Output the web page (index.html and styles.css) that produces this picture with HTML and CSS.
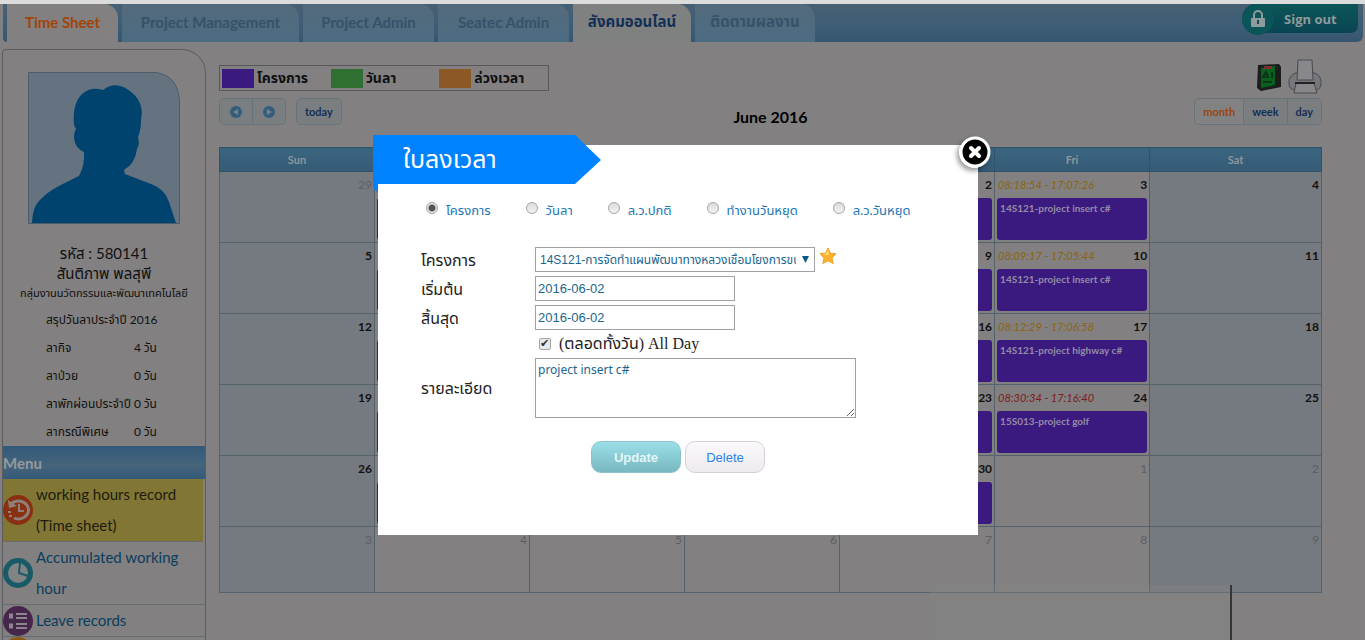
FILE: index.html
```html
<!DOCTYPE html>
<html lang="th">
<head>
<meta charset="utf-8">
<title>Time Sheet</title>
<link rel="stylesheet" href="styles.css">
</head>
<body>
<div class="page">
  <header class="topbar">
    <nav class="tabs">
      <a class="tab tab-current" href="#">Time Sheet</a>
      <a class="tab tab-wide" href="#">Project Management</a>
      <a class="tab" href="#">Project Admin</a>
      <a class="tab" href="#">Seatec Admin</a>
      <a class="tab tab-social" href="#">สังคมออนไลน์</a>
      <a class="tab tab-last" href="#">ติดตามผลงาน</a>
    </nav>
    <a class="signout" href="#">
      <span class="signout-icon"><svg viewBox="0 0 16 20" width="16" height="20"><path d="M4 9V6a4 4 0 0 1 8 0v3" fill="none" stroke="#8f9b9c" stroke-width="2"/><rect x="1" y="9" width="14" height="9" rx="1" fill="#8f9b9c"/><path d="M8 11v4" stroke="#15494f" stroke-width="2"/></svg></span>
      Sign out
    </a>
  </header>

  <div class="columns">
    <aside class="sidebar">
      <svg class="avatar" viewBox="0 0 152 152"><path d="M.5 .5H128Q151.500 4 151.500 32V151.500H.5Z" fill="#64737f" stroke="#4c5c69"/><path d="M4 151C5 139 6 134 13 127C22 117 37 111 51 104Q57 93 56 80Q47 76 46 66Q46 60 48 57L46 53Q44 32 54 22Q63 14 75 18Q86 9 99 17Q117 28 113 48Q113 58 110 65Q112 72 109 77Q107 92 96 98L97 102L123 112Q137 117 141 130L148 151Z" fill="#00436f"/></svg>
      <div class="who">
        <p class="who-name">รหัส : 580141</p>
        <p class="who-name">สันติภาพ พลสุพี</p>
        <p class="who-group">กลุ่มงานนวัตกรรมและพัฒนาเทคโนโลยี</p>
      </div>
      <table class="leave">
        <caption>สรุปวันลาประจำปี 2016</caption>
        <tr><th>ลากิจ</th><td>4</td><td>วัน</td></tr>
        <tr><th>ลาป่วย</th><td>0</td><td>วัน</td></tr>
        <tr><th>ลาพักผ่อนประจำปี</th><td>0</td><td>วัน</td></tr>
        <tr><th>ลากรณีพิเศษ</th><td>0</td><td>วัน</td></tr>
      </table>
      <h2 class="menu-title">Menu</h2>
      <nav class="menu">
        <a class="menu-item menu-current" href="#">
          <svg viewBox="0 0 30 30" width="30" height="30"><circle cx="15" cy="15" r="15" fill="#8a2f12"/><path d="M8 9A10 9 0 1 1 11 23" fill="none" stroke="#8d8279" stroke-width="3"/><path d="M5 5l1 8 8-2Z" fill="#8d8279"/><path d="M16 9v7h5" fill="none" stroke="#8d8279" stroke-width="2"/><path d="M5 17h3M6 21h3" stroke="#8d8279" stroke-width="2"/></svg>
          <span>working hours record (Time sheet)</span>
        </a>
        <a class="menu-item" href="#">
          <svg viewBox="0 0 30 30" width="30" height="30"><circle cx="15" cy="15" r="15" fill="#185a66"/><circle cx="15" cy="15" r="10" fill="#808484"/><path d="M17 5l-1 10 9 3" fill="none" stroke="#185a66" stroke-width="2"/></svg>
          <span>Accumulated working hour</span>
        </a>
        <a class="menu-item" href="#">
          <svg viewBox="0 0 30 30" width="30" height="30"><circle cx="15" cy="15" r="15" fill="#46264a"/><path d="M6 10h4M6 20h4" stroke="#8c858d" stroke-width="5"/><path d="M13 8h11M13 12h11M13 18h11M13 22h11" stroke="#8c858d" stroke-width="2"/></svg>
          <span>Leave records</span>
        </a>
        <a class="menu-item" href="#" aria-label="More">
          <svg viewBox="0 0 30 30" width="30" height="30"><circle cx="15" cy="15" r="15" fill="#8a5a12"/></svg>
        </a>
      </nav>
    </aside>

    <main class="main">
      <div class="tools">
        <ul class="legend">
          <li><i class="swatch swatch-project"></i>โครงการ</li>
          <li><i class="swatch swatch-leave"></i>วันลา</li>
          <li><i class="swatch swatch-overtime"></i>ล่วงเวลา</li>
        </ul>
        <div class="exports">
          <a href="#" aria-label="Book"><svg viewBox="0 0 26 28" width="26" height="28"><path d="M2 2L23 1L25 4V24L5 28L1 25Z" fill="#191d1b"/><path d="M5 5L19 3V22L5 25Z" fill="#08611f"/><path d="M8 3h8v3H8Z" fill="#7b3030"/><path d="M7 14l3-5 2 5ZM16 9v6M7 19h9" fill="none" stroke="#0b3516" stroke-width="2"/></svg></a>
          <a href="#" aria-label="Print"><svg viewBox="0 0 34 36" width="34" height="36"><g stroke="#4a4a4e"><path d="M8 14Q3 15 1 21Q0 30 6 31H28Q34 30 33 21Q31 15 26 14Z" fill="#77777b"/><path d="M10 1H24L25 21H9Z" fill="#88888c"/><path d="M8 24H26L29 34H6Z" fill="#88888c"/></g><path d="M7 23h20v2H7Z" fill="#222"/></svg></a>
        </div>
      </div>
      <div class="calbar">
        <div class="calbar-left">
          <div class="group">
            <button class="calbtn calbtn-arrow" aria-label="Previous"><svg viewBox="0 0 12 12" width="12" height="12"><circle cx="6" cy="6" r="6" fill="#345d7c"/><path d="M8 3v6L3 6Z" fill="#76838c"/></svg></button><button class="calbtn calbtn-arrow" aria-label="Next"><svg viewBox="0 0 12 12" width="12" height="12"><circle cx="6" cy="6" r="6" fill="#345d7c"/><path d="M4 3v6L9 6Z" fill="#76838c"/></svg></button>
          </div>
          <div class="group"><button class="calbtn">today</button></div>
        </div>
        <h1 class="month">June 2016</h1>
        <div class="calbar-right">
          <div class="group">
            <button class="calbtn calbtn-on">month</button><button class="calbtn">week</button><button class="calbtn">day</button>
          </div>
        </div>
      </div>
      <table class="cal">
        <thead><tr><th>Sun</th><th aria-label="Mon"></th><th>Tue</th><th>Wed</th><th>Thu</th><th>Fri</th><th class="col-sat">Sat</th></tr></thead>
        <tbody>
          <tr>
            <td class="off out"><div class="day"><b>29</b></div></td>
            <td class="out"><div class="day"><b>30</b></div><div class="event"></div></td>
            <td class="out"><div class="day"><b>31</b></div><div class="event"></div></td>
            <td><div class="day"><b>1</b></div><div class="event"></div></td>
            <td><div class="day"><b>2</b></div><div class="event"></div></td>
            <td><div class="day"><i>08:18:54 - 17:07:26</i><b>3</b></div><div class="event">14S121-project insert c#</div></td>
            <td class="off"><div class="day"><b>4</b></div></td>
          </tr>
          <tr>
            <td class="off"><div class="day"><b>5</b></div></td>
            <td><div class="day"><b>6</b></div><div class="event"></div></td>
            <td><div class="day"><b>7</b></div><div class="event"></div></td>
            <td><div class="day"><b>8</b></div><div class="event"></div></td>
            <td><div class="day"><b>9</b></div><div class="event"></div></td>
            <td><div class="day"><i>08:09:17 - 17:05:44</i><b>10</b></div><div class="event">14S121-project insert c#</div></td>
            <td class="off"><div class="day"><b>11</b></div></td>
          </tr>
          <tr>
            <td class="off"><div class="day"><b>12</b></div></td>
            <td><div class="day"><b>13</b></div><div class="event"></div></td>
            <td><div class="day"><b>14</b></div><div class="event"></div></td>
            <td><div class="day"><b>15</b></div><div class="event"></div></td>
            <td><div class="day"><b>16</b></div><div class="event"></div></td>
            <td><div class="day"><i>08:12:29 - 17:06:58</i><b>17</b></div><div class="event">14S121-project highway c#</div></td>
            <td class="off"><div class="day"><b>18</b></div></td>
          </tr>
          <tr>
            <td class="off"><div class="day"><b>19</b></div></td>
            <td><div class="day"><b>20</b></div><div class="event"></div></td>
            <td><div class="day"><b>21</b></div><div class="event"></div></td>
            <td><div class="day"><b>22</b></div><div class="event"></div></td>
            <td><div class="day"><b>23</b></div><div class="event"></div></td>
            <td><div class="day"><i class="late">08:30:34 - 17:16:40</i><b>24</b></div><div class="event">15S013-project golf</div></td>
            <td class="off"><div class="day"><b>25</b></div></td>
          </tr>
          <tr>
            <td class="off"><div class="day"><b>26</b></div></td>
            <td><div class="day"><b>27</b></div><div class="event"></div></td>
            <td><div class="day"><b>28</b></div><div class="event"></div></td>
            <td><div class="day"><b>29</b></div><div class="event"></div></td>
            <td><div class="day"><b>30</b></div><div class="event"></div></td>
            <td class="out"><div class="day"><b>1</b></div></td>
            <td class="off out"><div class="day"><b>2</b></div></td>
          </tr>
          <tr class="short">
            <td class="off out"><div class="day"><b>3</b></div></td>
            <td class="out"><div class="day"><b>4</b></div></td>
            <td class="out"><div class="day"><b>5</b></div></td>
            <td class="out"><div class="day"><b>6</b></div></td>
            <td class="out"><div class="day"><b>7</b></div></td>
            <td class="out"><div class="day"><b>8</b></div></td>
            <td class="off out"><div class="day"><b>9</b></div></td>
          </tr>
        </tbody>
      </table>
    </main>
  </div>

  <div class="toast"></div>

  <div class="overlay">
    <section class="dialog" role="dialog" aria-labelledby="dialog-title">
      <div class="ribbon">
        <svg class="ribbon-shape" viewBox="0 0 228 58" width="228" height="58"><path d="M0 0H202L228 25L202 49H5V58L0 52Z" fill="#0082ff"/></svg>
        <h2 class="ribbon-title" id="dialog-title">ใบลงเวลา</h2>
      </div>
      <button class="close" aria-label="Close"><svg viewBox="0 0 32 32" width="32" height="32"><circle cx="16" cy="16" r="14" fill="#000" stroke="#fff" stroke-width="3"/><path d="M12 12l8 8M20 12l-8 8" stroke="#fff" stroke-width="4" stroke-linecap="round"/></svg></button>
      <form class="form">
        <div class="kinds">
          <label><input class="radio" type="radio" name="kind" checked>โครงการ</label>
          <label><input class="radio" type="radio" name="kind">วันลา</label>
          <label><input class="radio" type="radio" name="kind">ล.ว.ปกติ</label>
          <label><input class="radio" type="radio" name="kind">ทำงานวันหยุด</label>
          <label><input class="radio" type="radio" name="kind">ล.ว.วันหยุด</label>
        </div>
        <div class="fields">
          <label for="project">โครงการ</label>
          <div class="project">
            <div class="select-wrap">
              <select class="box select" id="project"><option>14S121-การจัดทำแผนพัฒนาทางหลวงเชื่อมโยงการขนส่ง</option></select>
              <svg class="caret" viewBox="0 0 7 7" width="7" height="7"><path d="M0 0h7L3.500 7Z" fill="#0b5a85"/></svg>
            </div>
            <svg class="star" viewBox="0 0 18 18" width="18" height="18"><path d="M9 1l2.400 5.200 5.600.6-4 4 1.200 5.800L9 13.800 3.800 16.600 5 10.800l-4-4 5.600-.6Z" fill="#fbb02e" stroke="#f5a02a" stroke-linejoin="round"/><path d="M9 2.500L7 7l-4.500.6L10 8Z" fill="#fddd75"/></svg>
          </div>
          <label for="start">เริ่มต้น</label>
          <input class="box date" id="start" type="text" value="2016-06-02">
          <label for="end">สิ้นสุด</label>
          <input class="box date" id="end" type="text" value="2016-06-02">
          <label class="allday"><input class="check" type="checkbox" checked>(ตลอดทั้งวัน) All Day</label>
          <label for="detail">รายละเอียด</label>
          <textarea class="box detail" id="detail">project insert c#</textarea>
        </div>
        <div class="actions">
          <button class="btn btn-update" type="button">Update</button>
          <button class="btn btn-delete" type="button">Delete</button>
        </div>
      </form>
    </section>
  </div>
</div>
</body>
</html>
```
FILE: styles.css
```css
* { box-sizing: border-box; }

body {
  margin: 0;
  background: #828080;
  font-family: Lato, "Noto Sans Thai", "Liberation Sans", sans-serif;
  color: #111;
}

a { text-decoration: none; color: inherit; }
button { font-family: inherit; cursor: pointer; }
h1, h2, p, ul { margin: 0; padding: 0; }

.page {
  position: relative;
  height: 100vh;
  overflow: hidden;
  border-top: 4px solid #dcdcdc;
}

/* Top bar */
.topbar {
  display: flex;
  justify-content: space-between;
  height: 38px;
  margin: 0 2px 0 3px;
  padding-left: 4px;
  background: linear-gradient(#476073, #3d5d77 60%, #38556e);
  border-radius: 0 0 6px 4px;
}
.tabs { display: flex; gap: 4px; }
.tab {
  display: flex;
  align-items: center;
  justify-content: center;
  width: 131px;
  height: 38px;
  padding-bottom: 2px;
  background: linear-gradient(#536a7b, #4c6c82);
  border-radius: 0 14px 0 0;
  color: #355269;
  font-size: 15px;
  font-weight: 700;
}
.tab-current { width: 111px; background: #828080; color: #a24408; }
.tab-wide { width: 177px; }
.tab-social { width: 118px; background: #7f8080; color: #122f55; }
.tab-last { width: 120px; }
.signout {
  display: flex;
  align-items: center;
  gap: 10px;
  width: 116px;
  height: 29px;
  margin-right: 5px;
  background: linear-gradient(#0b5558, #0a4552);
  border-radius: 16px 0 8px 16px;
  color: #8f9b9c;
  font: 700 13px "Open Sans", sans-serif;
  white-space: nowrap;
}
.signout-icon {
  display: flex;
  flex: none;
  align-items: center;
  justify-content: center;
  width: 32px;
  height: 32px;
  border-radius: 50%;
  background: #0b5558;
}

/* Columns */
.columns { display: flex; gap: 13px; padding: 7px 43px 0 2px; }

.sidebar {
  flex: none;
  width: 204px;
  border: 1px solid #5b5c60;
  border-radius: 4px 24px 0 0;
}
.avatar { display: block; width: 152px; height: 152px; margin: 22px 0 0 25px; }
.who { padding-top: 19px; text-align: center; white-space: nowrap; }
.who p { line-height: 20px; }
.who-name { font-size: 15px; }
.who-group { font-size: 11px; }
.leave {
  width: 116px;
  margin: 3px 0 0 43px;
  border-collapse: collapse;
  font-size: 12px;
  line-height: 28px;
  white-space: nowrap;
  text-align: left;
}
.leave caption { text-align: left; }
.leave th { width: 88px; max-width: 88px; padding: 0; font-weight: 400; }
.leave td { padding: 0; }
.menu-title {
  height: 33px;
  background: linear-gradient(#33597a, #46647b 60%, #33597a);
  color: #94999d;
  font-size: 15px;
  line-height: 35px;
}
.menu-item {
  display: flex;
  align-items: center;
  gap: 3px;
  border-bottom: 1px solid #686c70;
  color: #0b3d5e;
  font-size: 15px;
  line-height: 31px;
}
.menu-item svg { flex: none; }
.menu-current { margin-right: 2px; background: #817634; color: #201c10; }

/* Main area */
.main { flex: 1; min-width: 0; padding-top: 9px; }
.tools { display: flex; justify-content: space-between; height: 40px; }
.legend {
  display: flex;
  align-items: center;
  width: 330px;
  height: 26px;
  margin-top: 7px;
  padding-left: 2px;
  border: 1px solid #58585a;
  list-style: none;
  font-size: 14px;
  font-weight: 700;
}
.legend li { display: flex; align-items: center; gap: 3px; width: 109px; }
.swatch { width: 32px; height: 19px; }
.swatch-project { background: #3b1a80; }
.swatch-leave { background: #2f7032; }
.swatch-overtime { background: #8c5825; }
.exports { display: flex; align-items: center; gap: 6px; }

.calbar {
  display: grid;
  grid-template-columns: 1fr auto 1fr;
  align-items: center;
  height: 27px;
}
.calbar-left { display: flex; gap: 10px; }
.calbar-right { display: flex; justify-content: flex-end; }
.group {
  display: flex;
  border: 1px solid #68727a;
  border-radius: 5px;
  overflow: hidden;
}
.calbtn {
  display: flex;
  align-items: center;
  height: 25px;
  padding: 0 8px;
  border: 0;
  background: #7b7e81;
  color: #122f55;
  font-size: 11px;
  font-weight: 700;
}
.calbtn + .calbtn { border-left: 1px solid #68727a; }
.calbtn-arrow { padding: 0 10px; }
.calbtn-on { background: #838282; color: #97460d; }
.month { padding-top: 10px; font-size: 16px; line-height: 17px; color: #000; }

.cal {
  width: 100%;
  margin-top: 22px;
  border-collapse: collapse;
  table-layout: fixed;
}
.cal th {
  height: 24px;
  padding: 0;
  border: 1px solid #315268;
  background: linear-gradient(#3b657f, #355b76);
  color: #8e969a;
  font-size: 11px;
}
.cal .col-sat { width: 15.6%; }
.cal td {
  height: 71px;
  padding: 0;
  border: 1px solid #53626b;
  vertical-align: top;
}
.cal .short td { height: 66px; }
.off { background: #757980; }
.day {
  display: flex;
  padding: 4px 2px 0 3px;
  font-size: 11px;
  line-height: 18px;
  white-space: nowrap;
}
.day b { margin-left: auto; font-size: 12px; }
.day i { color: #8c6410; }
.day .late { color: #80191c; }
.out b { color: #5e5f62; font-weight: 400; }
.event {
  height: 42px;
  margin: 4px 2px 0;
  padding: 3px;
  border-radius: 3px;
  background: #3b1a80;
  color: #948aa6;
  font-size: 10px;
  font-weight: 700;
  line-height: 15px;
  white-space: nowrap;
}

.toast {
  position: absolute;
  right: 133px;
  bottom: 0;
  width: 302px;
  height: 55px;
  background: rgba(135, 135, 135, .35);
  border-right: 2px solid #333537;
}

/* Dialog */
.overlay {
  position: absolute;
  inset: 0;
  display: flex;
  justify-content: center;
  align-items: flex-start;
  padding: 141px 9px 0 0;
}
.dialog {
  position: relative;
  width: 600px;
  min-height: 390px;
  padding: 55px 43px 62px;
  background: #fff;
}
.ribbon { position: absolute; left: -5px; top: -10px; }
.ribbon-shape { display: block; }
.ribbon-title {
  position: absolute;
  left: 30px;
  top: 0;
  color: #fff;
  font-size: 25px;
  font-weight: 400;
  line-height: 47px;
  white-space: nowrap;
}
.close {
  position: absolute;
  right: -13px;
  top: -9px;
  padding: 0;
  border: 0;
  border-radius: 50%;
  background: none;
  box-shadow: -2px 3px 5px rgba(0, 0, 0, .4);
  line-height: 0;
}
.kinds {
  display: flex;
  gap: 35px;
  padding-left: 5px;
  color: #1b78b5;
  font-size: 13px;
  line-height: 20px;
  white-space: nowrap;
}
.kinds label { display: flex; gap: 8px; }
.radio {
  appearance: none;
  width: 12px;
  height: 12px;
  margin: 2px 0 0;
  border: 1px solid #a5a5a5;
  border-radius: 50%;
  background: linear-gradient(#dcdcdc, #f2f2f2);
}
.radio:checked { background: radial-gradient(#555 0 3px, #e6e6e6 4px); }

.fields {
  display: grid;
  grid-template-columns: 114px 1fr;
  row-gap: 4px;
  align-items: center;
  justify-items: start;
  margin-top: 27px;
  font-size: 16px;
  line-height: 20px;
  color: #222;
}
.box {
  margin: 0;
  height: 25px;
  padding: 0 2px;
  border: 1px solid #a0a0a6;
  border-radius: 0;
  background: #fff;
  color: #1a668f;
  font: 13px "Liberation Sans", "Noto Sans Thai", sans-serif;
}
.project { display: flex; gap: 4px; }
.select-wrap { position: relative; }
.select {
  appearance: none;
  width: 280px;
  padding: 0 18px 0 4px;
  font-size: 12px;
}
.caret { position: absolute; right: 6px; top: 9px; }
.date { width: 200px; }
.allday {
  grid-column: 2;
  display: flex;
  align-items: center;
  gap: 8px;
  height: 20px;
  padding-left: 4px;
  font-family: "Liberation Serif", "Noto Sans Thai", serif;
}
.check {
  appearance: none;
  width: 12px;
  height: 12px;
  margin: 0;
  border: 1px solid #a5a5a5;
  border-radius: 2px;
  background: #e8e8e8;
  color: #333;
}
.check::before {
  content: "✔";
  display: block;
  font: 11px "DejaVu Sans", sans-serif;
  line-height: 10px;
}
.detail {
  width: 321px;
  height: 60px;
  padding: 2px;
  font: 12px "Noto Sans", sans-serif;
}
.actions {
  display: flex;
  gap: 4px;
  margin-top: 23px;
  padding-left: 170px;
}
.btn {
  height: 32px;
  border-radius: 10px;
  font: 13px "Liberation Sans", sans-serif;
}
.btn-update {
  width: 90px;
  border: 1px solid #8bc2ca;
  background: linear-gradient(#9bdfe8, #78b8c0);
  color: #e4f5f7;
  font-weight: 700;
}
.btn-delete {
  width: 80px;
  border: 1px solid #d4d0d4;
  background: linear-gradient(#fbf9fb, #edebee);
  color: #2a83ea;
}
```
